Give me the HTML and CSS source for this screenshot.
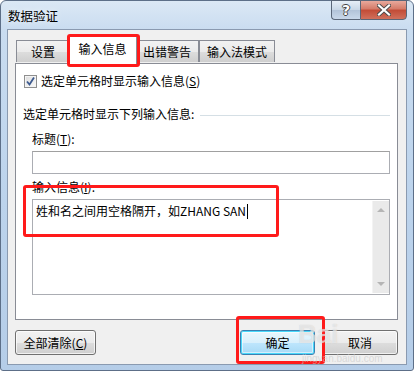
FILE: index.html
```html
<!DOCTYPE html>
<html lang="zh">
<head>
<meta charset="utf-8">
<title>数据验证</title>
<link rel="stylesheet" href="styles.css">
</head>
<body>
<div class="window">
  <div class="titlebar">
    <span class="title">数据验证</span>
    <div class="caption-btns">
      <span class="cbtn help">?</span>
      <span class="cbtn close">
        <svg width="14" height="12" viewBox="0 0 14 12"><path d="M2 1.5 L12 10.5 M12 1.5 L2 10.5" stroke="#4a4a4a" stroke-width="4" stroke-linecap="square"/><path d="M2 1.5 L12 10.5 M12 1.5 L2 10.5" stroke="#fff" stroke-width="2.2" stroke-linecap="square"/></svg>
      </span>
    </div>
  </div>
  <div class="client">
    <div class="tabs">
      <div class="tab t1">设置</div>
      <div class="tab active">输入信息</div>
      <div class="tab t3">出错警告</div>
      <div class="tab t4">输入法模式</div>
    </div>
    <div class="panel">
      <label class="check-row">
        <span class="checkbox">
          <svg width="11" height="11" viewBox="0 0 11 11"><path d="M2 5.5 L4.5 8.5 L9 1.5" fill="none" stroke="#3d5a8f" stroke-width="1.8"/></svg>
        </span>
        <span>选定单元格时显示输入信息(<u>S</u>)</span>
      </label>
      <div class="group-label"><span>选定单元格时显示下列输入信息:</span><span class="sep"></span></div>
      <div class="field-label">标题(<u>T</u>):</div>
      <div class="input"></div>
      <div class="field-label lbl2">输入信息(<u>I</u>):</div>
      <div class="textarea">
        <div class="ta-text">姓和名之间用空格隔开，如ZHANG SAN<span class="caret"></span></div>
        <div class="scrollbar">
          <span class="arrow up"></span>
          <span class="arrow down"></span>
        </div>
      </div>
    </div>
    <div class="buttons">
      <div class="btn clear">全部清除(<u>C</u>)</div>
      <div class="spacer"></div>
      <div class="btn ok">确定</div>
      <div class="btn cancel">取消</div>
    </div>
  </div>
  <div class="mark mark-tab"></div>
  <div class="mark mark-text"></div>
  <div class="mark mark-ok"></div>
  <div class="watermark">
    <span class="wm-bai">Bai</span>
    <span class="wm-url">jingyan.baidu.com</span>
  </div>
</div>
</body>
</html>
```
FILE: styles.css
```css
* { box-sizing: border-box; }
html, body { margin: 0; padding: 0; }
body {
  width: 414px;
  height: 371px;
  overflow: hidden;
  background: #fff;
  font-family: "Noto Sans CJK SC", "Noto Sans", sans-serif;
  font-size: 12px;
  color: #000;
}
u { text-decoration: underline; text-underline-offset: 1px; }

.window {
  position: relative;
  width: 414px;
  height: 371px;
  background: linear-gradient(to bottom, #dbe8f5 0px, #c9dcf0 30px, #bcd3ec 200px, #b5cde8 371px);
  border: 1px solid #5d6f88;
  border-radius: 6px 6px 3px 3px;
  display: flex;
  flex-direction: column;
}

.titlebar {
  height: 28px;
  display: flex;
  align-items: flex-start;
  justify-content: space-between;
}
.title {
  margin: 6px 0 0 7px;
  font-size: 12.5px;
  line-height: 18px;
  color: #000;
  text-shadow: 0 0 6px rgba(255,255,255,0.9);
}
.caption-btns {
  display: flex;
  margin-right: 6px;
  margin-top: -1px;
}
.cbtn {
  height: 20px;
  display: flex;
  align-items: center;
  justify-content: center;
  border: 1px solid #5a6678;
}
.help {
  width: 29px;
  border-radius: 0 0 0 4px;
  border-right: none;
  background: linear-gradient(to bottom, #e6eef7 0%, #c8d6e6 50%, #b2c3d8 51%, #c9d8ea 100%);
  color: #fff;
  font-family: "DejaVu Sans", sans-serif;
  font-weight: bold;
  font-size: 14px;
  text-shadow: -1px 0 #444, 1px 0 #444, 0 -1px #444, 0 1px #444;
}
.close {
  width: 47px;
  border-radius: 0 0 4px 0;
  background: linear-gradient(to bottom, #e8a99c 0%, #d47a68 45%, #c24b36 50%, #d0705c 100%);
}

.client {
  flex: 1;
  margin: 0 6px 5px 6px;
  background: #f0f0f0;
  border: 1px solid #8a9ab0;
  display: flex;
  flex-direction: column;
  padding: 5px 8px 0 7px;
}

.tabs {
  display: flex;
  align-items: flex-end;
  height: 28px;
  padding-left: 1px;
  position: relative;
  z-index: 1;
}
.tab {
  height: 22px;
  border: 1px solid #898c95;
  border-bottom: none;
  background: linear-gradient(to bottom, #f2f2f2 0%, #ebebeb 50%, #dddddd 51%, #cfcfcf 100%);
  display: flex;
  align-items: center;
  justify-content: center;
  font-size: 12px;
  margin-bottom: 1px;
}
.t1 { width: 53px; border-right: none; }
.active {
  width: 69px;
  height: 28px;
  margin: 0 -1px -1px -1px;
  background: #fff;
  padding-bottom: 4px;
  position: relative;
  z-index: 2;
}
.t3 { width: 63px; border-left: none; }
.t4 { width: 76px; border-left: 1px solid #898c95; }

.panel {
  height: 257px;
  background: #fff;
  border: 1px solid #898c95;
  padding: 10px 7px 0 7px;
  display: flex;
  flex-direction: column;
}

.check-row {
  display: flex;
  align-items: center;
  height: 14px;
  margin-left: 1px;
  gap: 4px;
}
.checkbox {
  width: 13px;
  height: 13px;
  border: 1px solid #8f8f8f;
  background: linear-gradient(135deg, #dcdcdc, #fbfbfb);
  box-shadow: inset 0 0 0 1px #f4f4f4;
  display: flex;
  align-items: center;
  justify-content: center;
}
.check-row span:last-child { font-size: 12px; line-height: 14px; }

.group-label {
  margin-top: 18px;
  display: flex;
  align-items: center;
  font-size: 12px;
  line-height: 16px;
  height: 16px;
}
.sep {
  flex: 1;
  height: 1px;
  background: #d5dfe5;
  margin: 2px 0 0 6px;
}

.field-label {
  margin: 9px 0 0 9px;
  font-size: 12px;
  line-height: 16px;
  height: 16px;
}
.input {
  margin: 4px 0 0 9px;
  height: 23px;
  border: 1px solid #abadb3;
  border-top-color: #a0a0a0;
  background: #fff;
}
.lbl2 { margin-top: 5px; }

.textarea {
  margin: 4px 0 0 9px;
  height: 96px;
  border: 1px solid #abadb3;
  display: flex;
  position: relative;
}
.ta-text {
  flex: 1;
  padding: 2px 0 0 3px;
  font-size: 12px;
  line-height: 17px;
}
.caret {
  display: inline-block;
  width: 1px;
  height: 15px;
  background: #000;
  vertical-align: -3px;
  margin-left: 1px;
}
.scrollbar {
  width: 17px;
  background: #eaeaea;
  border-left: 1px solid #f3f3f3;
  margin: 1px 0;
  display: flex;
  flex-direction: column;
  justify-content: space-between;
  align-items: center;
  padding: 7px 0 7px 0;
}
.arrow {
  width: 0; height: 0;
  border-left: 4px solid transparent;
  border-right: 4px solid transparent;
}
.arrow.up { border-bottom: 4px solid #b5b5b5; }
.arrow.down { border-top: 4px solid #b5b5b5; }

.buttons {
  display: flex;
  margin-top: 10px;
  height: 25px;
}
.btn {
  height: 25px;
  border: 1px solid #707070;
  border-radius: 3px;
  background: linear-gradient(to bottom, #f2f2f2 0%, #ebebeb 50%, #dddddd 51%, #cfcfcf 100%);
  display: flex;
  align-items: center;
  justify-content: center;
  font-size: 12px;
  box-shadow: inset 0 0 0 1px rgba(255,255,255,0.7);
}
.clear { width: 81px; }
.spacer { flex: 1; }
.ok {
  width: 75px;
  border-color: #3c7fb1;
  box-shadow: inset 0 0 0 1px #48d8fb, inset 0 0 0 2px rgba(255,255,255,0.5);
  background: linear-gradient(to bottom, #eaf6fd 0%, #d9f0fc 50%, #bee6fd 51%, #a7d9f5 100%);
}
.cancel { width: 76px; margin-left: 7px; }

.mark {
  position: absolute;
  border: 3px solid #ff1a1a;
  border-radius: 3px;
  pointer-events: none;
  z-index: 5;
}
.mark-tab { left: 66px; top: 33px; width: 73px; height: 33px; }
.mark-text { left: 22px; top: 184px; width: 256px; height: 52px; }
.mark-ok { left: 235px; top: 315px; width: 89px; height: 48px; }

.watermark {
  position: absolute;
  left: 295px;
  top: 316px;
  width: 110px;
  height: 50px;
  z-index: 6;
  pointer-events: none;
  font-family: "Liberation Sans", sans-serif;
}
.wm-bai {
  position: absolute;
  left: 2px;
  top: 2px;
  font-size: 26px;
  font-weight: bold;
  color: rgba(255,255,255,0.5);
  text-shadow: 0 0 1px rgba(170,170,170,0.55);
}
.wm-url {
  position: absolute;
  left: 6px;
  top: 36px;
  font-size: 10px;
  color: rgba(200,200,200,0.6);
}
```
